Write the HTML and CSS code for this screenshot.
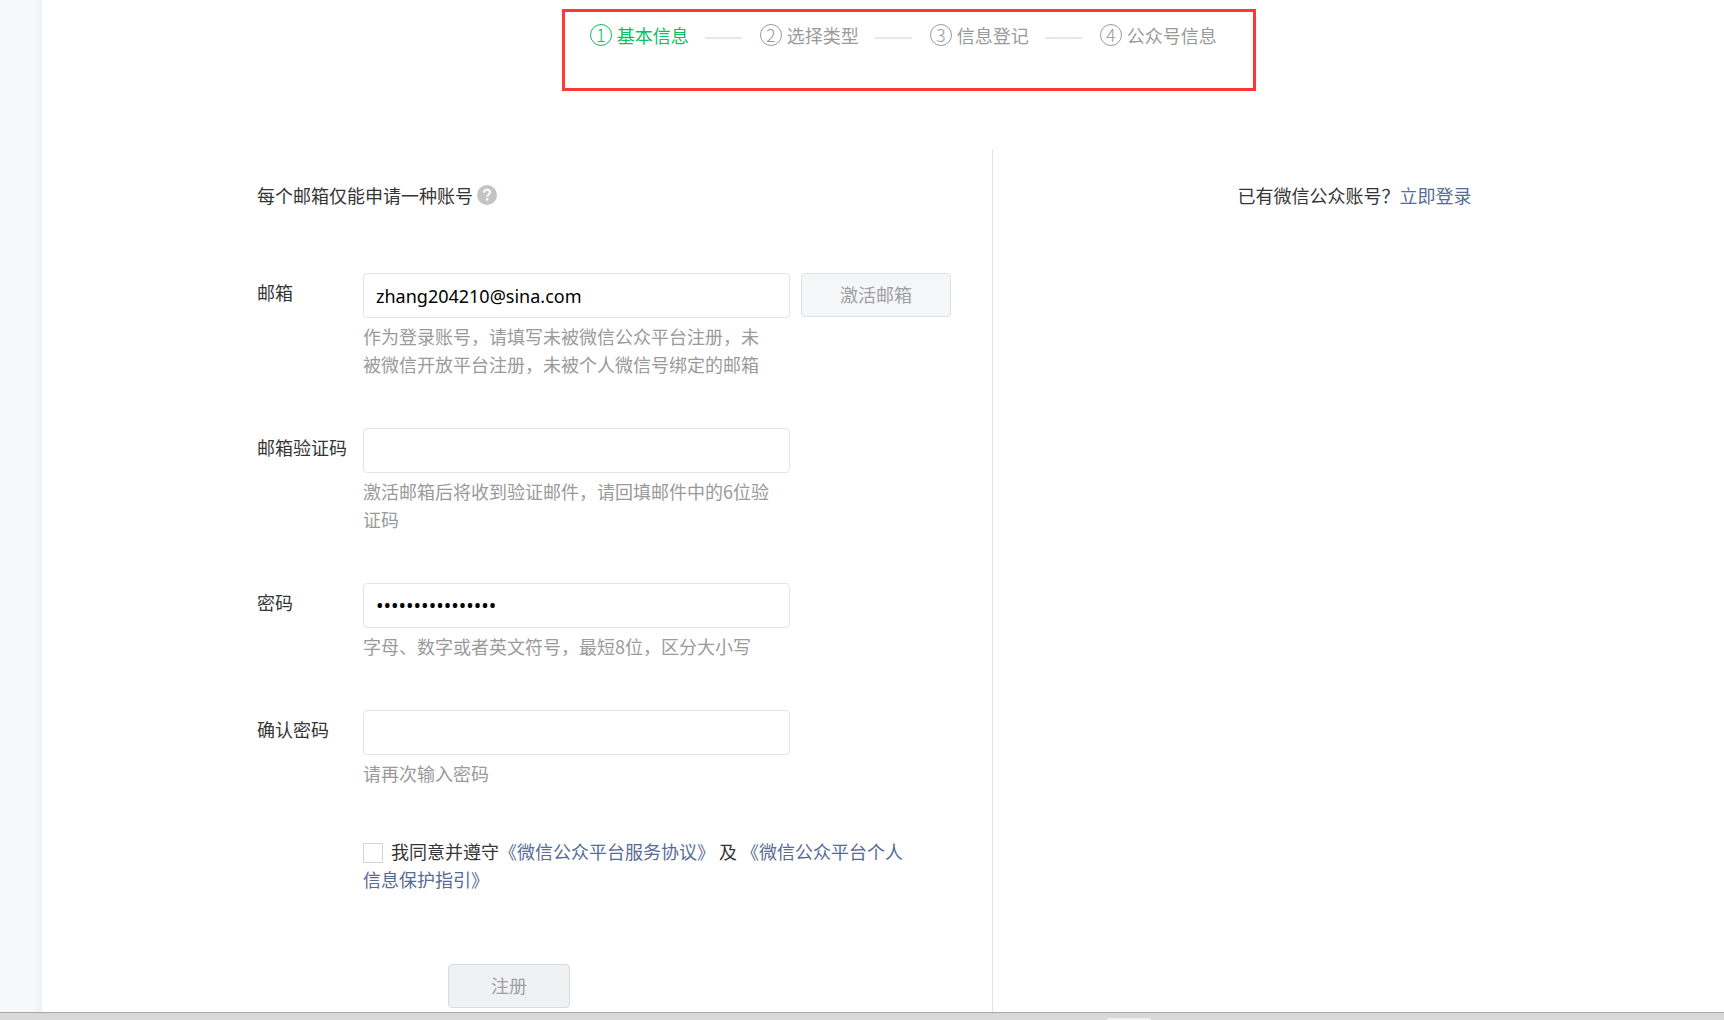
FILE: index.html
```html
<!DOCTYPE html>
<html lang="zh-CN">
<head>
  <meta charset="utf-8">
  <meta name="viewport" content="width=device-width, initial-scale=1">
  <title>注册</title>
  <link rel="stylesheet" href="styles.css">
</head>
<body>
  <div class="page">
    <div class="gutter"></div>
    <main class="panel">
      <ol class="steps">
        <li class="step step-active"><span class="step-num">1</span>基本信息</li>
        <li class="step"><span class="step-num">2</span>选择类型</li>
        <li class="step"><span class="step-num">3</span>信息登记</li>
        <li class="step"><span class="step-num">4</span>公众号信息</li>
      </ol>
      <div class="columns">
        <form class="form">
          <p class="notice">每个邮箱仅能申请一种账号
            <svg class="help" viewBox="0 0 20 20" aria-hidden="true">
              <circle cx="10" cy="10" r="10" fill="#c4c4c4"/>
              <path d="M7 7.8C7 5.8 8.3 4.8 10 4.8s3 1 3 2.6c0 2.1-2.8 2.1-2.8 4.4" fill="none" stroke="#fff" stroke-width="2"/>
              <rect x="9" y="13.2" width="2.3" height="2.3" fill="#fff"/>
            </svg>
          </p>
          <div class="row">
            <label class="label" for="email">邮箱</label>
            <div class="field">
              <div class="line">
                <input class="input" id="email" type="text" value="zhang204210@sina.com">
                <button class="btn btn-activate" type="button">激活邮箱</button>
              </div>
              <p class="hint">作为登录账号，请填写未被微信公众平台注册，未<br>被微信开放平台注册，未被个人微信号绑定的邮箱</p>
            </div>
          </div>
          <div class="row">
            <label class="label" for="code">邮箱验证码</label>
            <div class="field">
              <input class="input" id="code" type="text">
              <p class="hint">激活邮箱后将收到验证邮件，请回填邮件中的6位验<br>证码</p>
            </div>
          </div>
          <div class="row">
            <label class="label" for="password">密码</label>
            <div class="field">
              <input class="input input-password" id="password" type="password" value="abcdefgh12345678">
              <p class="hint">字母、数字或者英文符号，最短8位，区分大小写</p>
            </div>
          </div>
          <div class="row">
            <label class="label" for="confirm">确认密码</label>
            <div class="field">
              <input class="input input-password" id="confirm" type="password">
              <p class="hint">请再次输入密码</p>
            </div>
          </div>
          <div class="consent">
            <input class="check" id="agree" type="checkbox"><label for="agree">我同意并遵守</label><a href="#">《微信公众平台服务协议》</a> 及 <a href="#">《微信公众平台个人信息保护指引》</a>
          </div>
          <button class="btn btn-submit" type="submit">注册</button>
        </form>
        <aside class="aside">已有微信公众账号？<a href="#">立即登录</a></aside>
      </div>
    </main>
  </div>
  <footer class="bar"><div class="bar-tab"></div></footer>
</body>
</html>
```
FILE: styles.css
```css
* { box-sizing: border-box; }

body {
  display: flex;
  flex-direction: column;
  min-height: 100vh;
  margin: 0;
  background: #fff;
  color: #353535;
  font: 18px/28px "Noto Sans CJK SC", sans-serif;
}

p { margin: 0; }
a { color: #576b95; text-decoration: none; }

.page { display: flex; flex: 1; }

.gutter {
  width: 42px;
  background: linear-gradient(to right, #f6f8f9 34px, #eff1f3);
}

.panel {
  display: flex;
  flex: 1;
  flex-direction: column;
  padding-top: 9px;
}

/* progress steps */
.steps {
  display: flex;
  width: 694px;
  height: 82px;
  margin: 0 0 58px 30.9%;
  padding: 9px 22px 0 25px;
  border: 3px solid #ff3737;
  list-style: none;
  color: #9a9a9a;
}

.step {
  display: flex;
  align-items: center;
  height: 28px;
  white-space: nowrap;
}

.step:not(:last-child)::after {
  content: "";
  width: 37px;
  height: 2px;
  margin: 6px 18px 0 16px;
  background: #e4e8eb;
}

.step-active { color: #07c160; }

.step-num {
  width: 22px;
  height: 22px;
  margin-right: 5px;
  border: 1px solid currentColor;
  border-radius: 50%;
  font-weight: 300;
  line-height: 19px;
  text-align: center;
}

/* form and sign-in columns */
.columns {
  display: grid;
  flex: 1;
  grid-template-columns: 951fr 731fr;
}

.form {
  padding: 32px 0 3px 215px;
  border-right: 1px solid #e4e4e6;
}

.notice {
  display: flex;
  gap: 4px;
  align-items: center;
  margin-bottom: 64px;
}

.help { width: 20px; height: 20px; }

.row {
  display: flex;
  margin-bottom: 50px;
}

.label {
  flex: none;
  width: 106px;
  line-height: 38px;
  white-space: nowrap;
}

.line { display: flex; gap: 11px; }

.input {
  display: block;
  width: 427px;
  height: 45px;
  padding: 0 12px;
  border: 1px solid #e4e4e6;
  border-radius: 4px;
  background: #fff;
  color: #000;
  font: 18px "Noto Sans", sans-serif;
}

.input-password { font-size: 20px; }

.hint {
  margin-top: 4px;
  color: #9a9a9a;
  white-space: nowrap;
}

.btn {
  height: 44px;
  padding: 0 0 3px;
  border: 1px solid #dfe1e4;
  border-radius: 4px;
  background: #f5f6f8;
  color: #9fa0a3;
  font: inherit;
}

.btn-activate { width: 150px; }

.btn-submit {
  display: block;
  width: 122px;
  margin: 71px 0 0 191px;
  border-color: #d9dadd;
  background: #f0f1f3;
}

.consent {
  width: 550px;
  margin-left: 106px;
}

.check {
  width: 20px;
  height: 20px;
  margin: 0 8px 0 0;
  appearance: none;
  border: 1px solid #d3d3d6;
  background: #fff;
  vertical-align: -4px;
}

.aside {
  padding: 32px 8px 0 0;
  text-align: center;
}

/* strip along the bottom edge */
.bar {
  height: 8px;
  padding: 5px 0 0 1106px;
  overflow: hidden;
  border-top: 1px solid #a8a8a8;
  background: #d8d8d9;
}

.bar-tab {
  width: 46px;
  height: 8px;
  border-radius: 4px;
  background: #efefef;
}
```
